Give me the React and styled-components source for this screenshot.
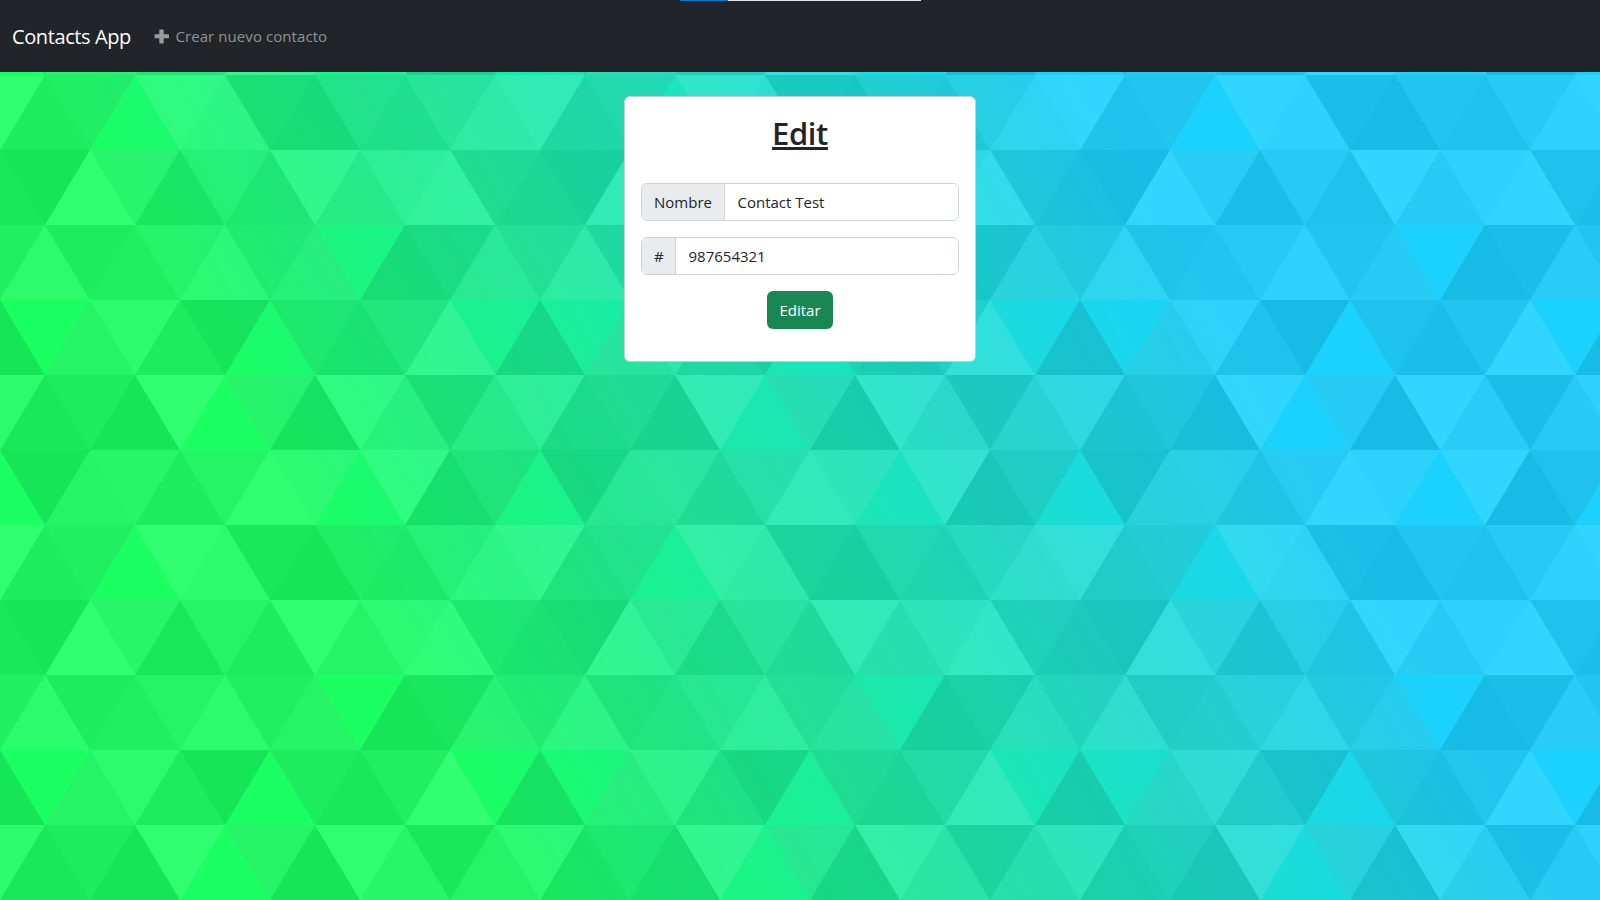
import React from "react";
import styled, { createGlobalStyle } from "styled-components";

const GlobalStyle = createGlobalStyle`
  *, *::before, *::after { box-sizing: border-box; }
  body {
    margin: 0;
    color: #212529;
    font-family: "Open Sans", "Noto Sans", sans-serif;
    font-size: 15px;
    line-height: 24px;
    overflow: hidden;
  }
`;

const Page = styled.div`
  position: relative;
  height: 100vh;
  display: flex;
  flex-direction: column;
  isolation: isolate;
`;

const Backdrop = styled.svg`
  position: absolute;
  inset: 0;
  z-index: -1;
  width: 100%;
  height: 100%;
`;

const LoadingBar = styled.div`
  position: absolute;
  top: 0;
  left: 680px;
  width: 241px;
  height: 1px;
  background: linear-gradient(to right, #0078d7 48px, #e6e6e6 48px);
`;

const Navbar = styled.nav`
  display: flex;
  align-items: center;
  flex: none;
  height: 72px;
  padding: 0 12px;
  background: #212529;
`;

const Brand = styled.a`
  width: 142px;
  padding-top: 1px;
  color: #fff;
  font-size: 20px;
  line-height: 30px;
  letter-spacing: -0.4px;
  white-space: nowrap;
`;

const NavLink = styled.a`
  display: flex;
  align-items: center;
  gap: 6.500px;
  color: #909294;
  letter-spacing: 0.07px;
  white-space: nowrap;
`;

const PlusIcon = styled.svg`
  width: 15px;
  height: 15px;
  fill: #999b9d;
`;

const Main = styled.main`
  display: flex;
  justify-content: center;
  padding-top: 24px;
`;

const Card = styled.section`
  display: flex;
  flex-direction: column;
  align-items: center;
  width: 352px;
  height: 266px;
  padding: 16px;
  border: 1px solid #c8cbcd;
  border-radius: 6px;
  background: #fff;
`;

const Title = styled.h2`
  margin: 1px 0 31px;
  font-size: 31px;
  font-weight: 600;
  line-height: 38px;
  letter-spacing: -0.4px;
  text-decoration: underline;
  text-decoration-thickness: 3px;
  text-underline-offset: 2px;
  text-decoration-skip-ink: none;
`;

const Field = styled.label`
  display: flex;
  width: 318px;
  height: 38px;
  margin-bottom: 16px;
  border: 1px solid #ced4da;
  border-radius: 6px;
  overflow: hidden;
`;

const FieldLabel = styled.span`
  flex: none;
  width: ${(p) => p.$width}px;
  padding: 6px 0 6px 12px;
  border-right: 1px solid #ced4da;
  background: #e9ecef;
`;

const FieldInput = styled.input`
  flex: 1;
  min-width: 0;
  padding: 6px 12.500px;
  border: 0;
  outline: 0;
  color: #212529;
  background: #fff;
  font: inherit;
`;

const SubmitButton = styled.button`
  width: 66px;
  height: 38px;
  padding: 0;
  border: 0;
  border-radius: 6px;
  color: #fff;
  background: #198754;
  font: inherit;
`;

// Shades of one 540x450 tile, row by row. "down" triangles of even rows and
// "up" triangles of odd rows have their tip at 45 + 90k; the others at 90k.
// A null leaves the gradient bare.
const TILE_ROWS = [
  { inner: ["#000", "#aaa", "#999", "#ddd", "#fff", "#444"], outer: [null, "#999", "#444", "#fff", null, "#000"] },
  { inner: ["#444", null, "#ddd", "#000", "#444", "#ddd"], outer: ["#fff", "#666", "#fff", "#222", "#666", "#999"] },
  { inner: ["#000", "#aaa", "#999", "#fff", "#ddd", "#444"], outer: ["#222", "#fff", "#222", "#444", "#999", "#fff"] },
  { inner: ["#ddd", "#666", "#ddd", "#999", "#000", "#aaa"], outer: ["#666", "#444", "#999", "#666", null, "#222"] },
  { inner: [null, "#ddd", "#000", "#444", "#666", null], outer: ["#000", "#999", "#444", null, "#222", "#fff"] },
  { inner: ["#222", "#000", null, "#000", "#aaa", "#999"], outer: ["#ddd", "#444", "#fff", "#999", "#fff", "#222"] },
];

const TRIANGLES = TILE_ROWS.flatMap(({ inner, outer }, row) => {
  const top = row * 75;
  const bottom = top + 75;
  const even = row % 2 === 0;
  const triangle = (tip, pointsDown, fill) => {
    const tipY = pointsDown ? bottom : top;
    const baseY = pointsDown ? top : bottom;
    return { fill, points: `${tip},${tipY} ${tip - 45},${baseY} ${tip + 45},${baseY}` };
  };
  return [
    ...inner.map((fill, k) => triangle(45 + 90 * k, even, fill)),
    ...[...outer, outer[0]].map((fill, k) => triangle(90 * k, !even, fill)),
  ].filter((t) => t.fill);
});

function TriangleBackdrop() {
  return (
    <Backdrop aria-hidden="true">
      <defs>
        <linearGradient id="sky" gradientUnits="userSpaceOnUse" x1="0" x2="0" y1="0" y2="100%" gradientTransform="rotate(240)">
          <stop offset="0" stopColor="#1aff62" />
          <stop offset="1" stopColor="#1ad1ff" />
        </linearGradient>
        <pattern id="tile" patternUnits="userSpaceOnUse" width="540" height="450">
          <g fillOpacity="0.1">
            {TRIANGLES.map((t) => (
              <polygon key={t.points} fill={t.fill} points={t.points} />
            ))}
          </g>
        </pattern>
      </defs>
      <rect width="100%" height="100%" fill="url(#sky)" />
      <rect width="100%" height="100%" fill="url(#tile)" />
    </Backdrop>
  );
}

export default function App() {
  return (
    <Page>
      <GlobalStyle />
      <TriangleBackdrop />
      <Navbar>
        <Brand>Contacts App</Brand>
        <NavLink>
          <PlusIcon viewBox="0 0 15 15">
            <path d="M6 0.500h3q.7 0 .7.7v4.100h4.600q.7 0 .7.7v2.600q0 .7-.7.7H9.700v4.500q0 .7-.7.7H6q-.7 0-.7-.7V9.300H1.200q-.7 0-.7-.7V6q0-.7.7-.7H5.300V1.200q0-.7.7-.7z" />
          </PlusIcon>
          Crear nuevo contacto
        </NavLink>
      </Navbar>
      <LoadingBar />
      <Main>
        <Card>
          <Title>Edit</Title>
          <Field>
            <FieldLabel $width={83}>Nombre</FieldLabel>
            <FieldInput defaultValue="Contact Test" />
          </Field>
          <Field>
            <FieldLabel $width={34}>#</FieldLabel>
            <FieldInput defaultValue="987654321" />
          </Field>
          <SubmitButton>Editar</SubmitButton>
        </Card>
      </Main>
    </Page>
  );
}
